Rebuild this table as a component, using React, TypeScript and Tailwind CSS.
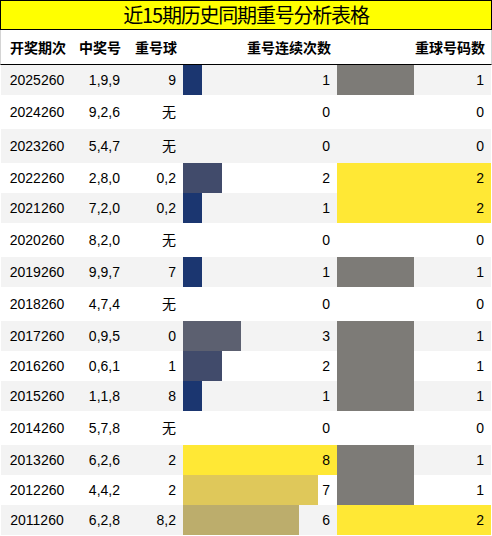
import React from "react";

type Row = [string, string, string, number, number];

const rows: Row[] = [
  ["2025260", "1,9,9", "9", 1, 1],
  ["2024260", "9,2,6", "无", 0, 0],
  ["2023260", "5,4,7", "无", 0, 0],
  ["2022260", "2,8,0", "0,2", 2, 2],
  ["2021260", "7,2,0", "0,2", 1, 2],
  ["2020260", "8,2,0", "无", 0, 0],
  ["2019260", "9,9,7", "7", 1, 1],
  ["2018260", "4,7,4", "无", 0, 0],
  ["2017260", "0,9,5", "0", 3, 1],
  ["2016260", "0,6,1", "1", 2, 1],
  ["2015260", "1,1,8", "8", 1, 1],
  ["2014260", "5,7,8", "无", 0, 0],
  ["2013260", "6,2,6", "2", 8, 1],
  ["2012260", "4,4,2", "2", 7, 1],
  ["2011260", "6,2,8", "8,2", 6, 2],
];

const streakColor: Record<number, string> = {
  1: "bg-[#1b3670]",
  2: "bg-[#414b6b]",
  3: "bg-[#5c6070]",
  6: "bg-[#bcad6c]",
  7: "bg-[#dfc85a]",
  8: "bg-[#ffe835]",
};

const countColor: Record<number, string> = {
  1: "bg-[#7d7b77]",
  2: "bg-[#ffe835]",
};

function BarCell({ value, max, color }: { value: number; max: number; color: string }) {
  return (
    <div className="relative flex items-center justify-end pr-[7px]">
      {value > 0 && (
        <div
          className={`absolute left-0 top-0 bottom-0 ${color}`}
          style={{ width: `${(value / max) * 100}%` }}
        />
      )}
      <span className="relative">{value}</span>
    </div>
  );
}

export default function App() {
  return (
    <div className="w-[492px] h-[536px] bg-white overflow-hidden text-black">
      <div
        className="h-[30px] border border-black bg-[#ffff00] flex items-center justify-center text-[20px] tracking-[-1.2px]"
        style={{ fontFamily: '"Noto Sans CJK SC", sans-serif' }}
      >
        近15期历史同期重号分析表格
      </div>
      <div
        className="grid grid-cols-[73px_54px_56px_154px_155px] h-[35px] border-b border-black border-x border-x-[#d4d4d4] font-bold text-[14px] items-center"
        style={{ fontFamily: '"Noto Sans CJK SC", sans-serif' }}
      >
        <div className="text-center pl-[1px]">开奖期次</div>
        <div className="text-right pr-[7px]">中奖号</div>
        <div className="text-right pr-[7px]">重号球</div>
        <div className="text-right pr-[7px]">重号连续次数</div>
        <div className="text-right pr-[8px]">重球号码数</div>
      </div>
      <div
        className="px-[1px] text-[14px]"
        style={{ fontFamily: '"Liberation Sans", "Noto Sans CJK SC", sans-serif' }}
      >
        {rows.map((r, i) => (
          <div
            key={r[0]}
            className={`grid grid-cols-[72px_54px_56px_154px_154px] ${
              r[2] === "无" ? "h-[34px]" : "h-[30px]"
            } ${i % 2 === 0 ? "bg-[#f3f3f3]" : "bg-white"}`}
          >
            <div className="flex items-center justify-center">{r[0]}</div>
            <div className="flex items-center justify-end pr-[7px]">{r[1]}</div>
            <div className="flex items-center justify-end pr-[7px]">{r[2]}</div>
            <BarCell value={r[3]} max={8} color={streakColor[r[3]] ?? ""} />
            <BarCell value={r[4]} max={2} color={countColor[r[4]] ?? ""} />
          </div>
        ))}
      </div>
    </div>
  );
}
